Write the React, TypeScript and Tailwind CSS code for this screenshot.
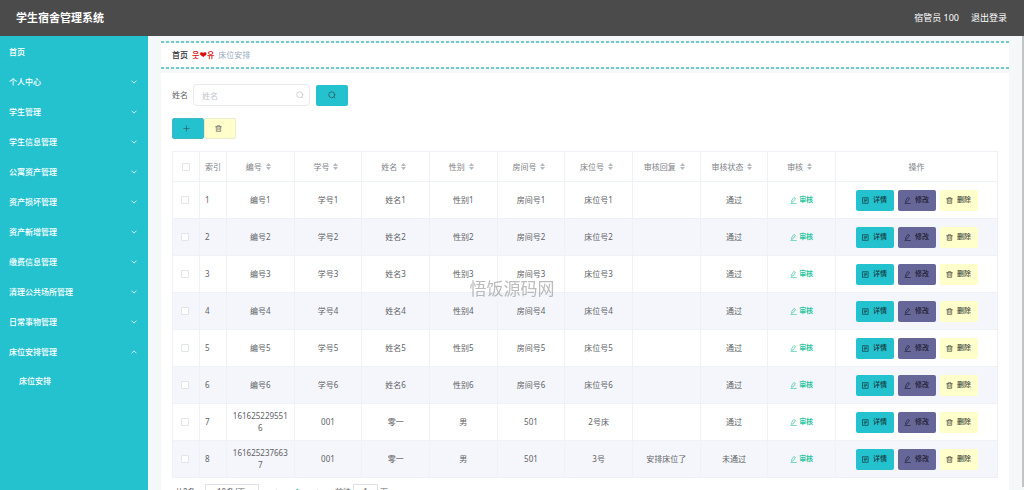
import type { ReactNode } from "react";

const MENU = [
  "个人中心",
  "学生管理",
  "学生信息管理",
  "公寓资产管理",
  "资产损坏管理",
  "资产新增管理",
  "缴费信息管理",
  "清理公共场所管理",
  "日常事物管理",
];

const COLUMNS = ["编号", "学号", "姓名", "性别", "房间号", "床位号", "审核回复", "审核状态", "审核"];

type Row = {
  code: string;
  student: string;
  name: string;
  gender: string;
  room: string;
  bed: string;
  reply: string;
  status: string;
};

const ROWS: Row[] = [
  ...[1, 2, 3, 4, 5, 6].map((n) => ({
    code: `编号${n}`,
    student: `学号${n}`,
    name: `姓名${n}`,
    gender: `性别${n}`,
    room: `房间号${n}`,
    bed: `床位号${n}`,
    reply: "",
    status: "通过",
  })),
  { code: "1616252295516", student: "001", name: "零一", gender: "男", room: "501", bed: "2号床", reply: "", status: "通过" },
  { code: "1616252376637", student: "001", name: "零一", gender: "男", room: "501", bed: "3号", reply: "安排床位了", status: "未通过" },
];

function Icon({ children, className = "size-[7px]" }: { children: ReactNode; className?: string }) {
  return (
    <svg
      viewBox="0 0 16 16"
      fill="none"
      stroke="currentColor"
      strokeWidth={1.5}
      strokeLinecap="round"
      strokeLinejoin="round"
      className={`shrink-0 ${className}`}
      aria-hidden
    >
      {children}
    </svg>
  );
}

function SearchIcon() {
  return (
    <Icon className="size-2">
      <circle cx="7.5" cy="7.5" r="6" />
      <path d="M12 12l2 2" />
    </Icon>
  );
}

function TrashIcon() {
  return (
    <Icon>
      <path d="M1.5 4h13M5 4V1.5h6V4M3 4v10.5h10V4M6.3 7v4.5M9.7 7v4.5" />
    </Icon>
  );
}

function EditIcon() {
  return (
    <Icon>
      <path d="M9.5 1.5l3 2-5.5 7.5-3.5 1.5.5-4zM2 15h12.5" />
    </Icon>
  );
}

function DetailIcon() {
  return (
    <Icon>
      <path d="M2 1.5h12v13H2zM5 5h6M5 8h6M5 11h3.5" />
    </Icon>
  );
}

function Chevron({ up = false }: { up?: boolean }) {
  return (
    <Icon className="size-[6px]">
      <path d={up ? "M2 11l6-6 6 6" : "M2 5l6 6 6-6"} strokeWidth={2} />
    </Icon>
  );
}

function SortCaret() {
  return (
    <svg viewBox="0 0 5 7" className="ml-1 mr-1 h-[7px] w-[5px] fill-[#b4b8bf]" aria-hidden>
      <path d="M2.5 0L5 3H0zM2.5 7L0 4h5z" />
    </svg>
  );
}

function Checkbox({ label }: { label: string }) {
  return (
    <input
      type="checkbox"
      aria-label={label}
      className="block size-2 appearance-none rounded-[1px] border border-[#e2e5ea] bg-white"
    />
  );
}

function Sidebar() {
  return (
    <nav className="w-[148px] shrink-0 bg-[#24c2cf] text-[8px] font-medium text-white">
      <a href="#home" className="flex h-[31px] items-center pl-[9px]">
        首页
      </a>
      {MENU.map((label) => (
        <button key={label} type="button" className="flex h-[30px] w-full items-center justify-between pl-[9px] pr-[11px]">
          {label}
          <Chevron />
        </button>
      ))}
      <button type="button" className="flex h-[30px] w-full items-center justify-between pl-[9px] pr-[11px]">
        床位安排管理
        <Chevron up />
      </button>
      <a href="#beds" className="flex h-[27px] items-center pl-[19px]">
        床位安排
      </a>
    </nav>
  );
}

function Dashes() {
  return <div className="h-[2px] bg-[repeating-linear-gradient(90deg,#79c7c7_0_3px,#e3f5f5_3px_5px)]" />;
}

function Breadcrumb() {
  return (
    <div className="bg-white">
      <Dashes />
      <div className="flex h-6 items-center px-[11px] text-[8px]">
        <a href="#home" className="font-medium text-[#303133]">
          首页
        </a>
        <span className="mx-1 flex items-center font-['Noto_Sans_CJK_KR',sans-serif] font-medium text-[#d80b0b]">
          웃<span className="font-['DejaVu_Sans',sans-serif] text-[9px] font-bold leading-[12px]">❤</span>유
        </span>
        <span className="text-[#97a8be]">床位安排</span>
      </div>
      <Dashes />
    </div>
  );
}

function Toolbar() {
  return (
    <>
      <form className="flex items-center" onSubmit={(e) => e.preventDefault()}>
        <label htmlFor="name" className="mr-[5px] text-[8px] text-[#606266]">
          姓名
        </label>
        <div className="relative mr-[6px]">
          <input
            id="name"
            placeholder="姓名"
            className="block h-[22px] w-[117px] rounded-sm border border-[#e8eaef] bg-white pl-2 text-[8px] placeholder:text-[#c0c4cc]"
          />
          <span className="absolute right-[6px] top-[7px] text-[#c0c4cc]">
            <SearchIcon />
          </span>
        </div>
        <button
          type="submit"
          aria-label="查询"
          className="grid h-[21px] w-8 place-items-center rounded-xs bg-[#24c2cf] text-[#33555c]"
        >
          <SearchIcon />
        </button>
      </form>
      <div className="mt-3 flex">
        <button
          type="button"
          aria-label="新增"
          className="flex h-[21px] w-8 items-center rounded-xs border border-[#40b8c4] bg-[#24c2cf] pl-[10px] text-[#33555c]"
        >
          <Icon>
            <path d="M8 2v12M2 8h12" />
          </Icon>
        </button>
        <button
          type="button"
          aria-label="删除"
          className="flex h-[21px] w-8 items-center rounded-xs border border-[#ebebcf] bg-[#ffffcc] pl-[10px] text-[#606266]"
        >
          <TrashIcon />
        </button>
      </div>
    </>
  );
}

const CELL = "border border-[#eef1f6] px-[4px]";
const ACTION = "flex h-[21px] w-[38px] items-center justify-center gap-1 rounded-xs text-[7px] font-medium";

function BedTable() {
  return (
    <table className="mt-3 w-full table-fixed border-collapse text-center text-[8px] leading-[12px] text-[#606266]">
      <colgroup>
        <col className="w-[27px]" />
        <col className="w-[27px]" />
        {COLUMNS.map((c) => (
          <col key={c} />
        ))}
        <col className="w-[162px]" />
      </colgroup>
      <thead>
        <tr className="h-[30px] text-[#7d8086]">
          <th className={`${CELL} pl-[9px]`}>
            <Checkbox label="全选" />
          </th>
          <th className={`${CELL} pl-[5px] text-left font-normal`}>索引</th>
          {COLUMNS.map((c) => (
            <th key={c} className={`${CELL} font-normal`}>
              <span className="flex items-center justify-center">
                {c}
                <SortCaret />
              </span>
            </th>
          ))}
          <th className={`${CELL} font-normal`}>操作</th>
        </tr>
      </thead>
      <tbody>
        {ROWS.map((row, i) => (
          <tr key={row.code} className="h-[37px] even:bg-[#f5f6fb]">
            <td className={`${CELL} pl-[8px]`}>
              <Checkbox label={`选择 ${i + 1}`} />
            </td>
            <td className={`${CELL} pl-[5px] text-left`}>{i + 1}</td>
            <td className={`${CELL} break-all`}>{row.code}</td>
            <td className={CELL}>{row.student}</td>
            <td className={CELL}>{row.name}</td>
            <td className={CELL}>{row.gender}</td>
            <td className={CELL}>{row.room}</td>
            <td className={CELL}>{row.bed}</td>
            <td className={CELL}>{row.reply}</td>
            <td className={CELL}>{row.status}</td>
            <td className={CELL}>
              <button type="button" className="mx-auto flex items-center gap-[2px] text-[7px] font-bold text-[#2cc5a0]">
                <EditIcon />
                审核
              </button>
            </td>
            <td className={CELL}>
              <div className="flex justify-center gap-1">
                <button type="button" className={`${ACTION} bg-[#24c2cf] text-[#16383c]`}>
                  <DetailIcon />
                  详情
                </button>
                <button type="button" className={`${ACTION} bg-[#666699] text-[#1d1d30]`}>
                  <EditIcon />
                  修改
                </button>
                <button type="button" className={`${ACTION} bg-[#ffffcc] text-[#42423a]`}>
                  <TrashIcon />
                  删除
                </button>
              </div>
            </td>
          </tr>
        ))}
      </tbody>
    </table>
  );
}

function Pagination() {
  return (
    <div className="mt-[6px] flex h-[15px] items-center px-[3px] text-[8px] leading-[12px] text-[#606266]">
      <span className="w-[30px]">共8条</span>
      <select
        aria-label="每页条数"
        className="h-[15px] w-[54px] appearance-none rounded-[1px] border border-[#dcdfe6] bg-white pl-[11px]"
      >
        <option>10条/页</option>
      </select>
      <div className="mx-[13px] flex w-[50px] items-center justify-between">
        <button type="button" aria-label="上一页" className="text-[#909399]">
          <Icon className="size-[6px]">
            <path d="M11 2L5 8l6 6" />
          </Icon>
        </button>
        <button type="button" className="font-bold text-[#2cc5a0]">
          1
        </button>
        <button type="button" aria-label="下一页" className="text-[#909399]">
          <Icon className="size-[6px]">
            <path d="M5 2l6 6-6 6" />
          </Icon>
        </button>
      </div>
      <label htmlFor="page">前往</label>
      <input
        id="page"
        defaultValue="1"
        className="mx-[2px] h-[15px] w-[25px] rounded-[1px] border border-[#dcdfe6] bg-white text-center"
      />
      <span>页</span>
    </div>
  );
}

export default function App() {
  return (
    <div className="flex h-screen flex-col overflow-hidden bg-[#f5f8f9] font-['Noto_Sans','Noto_Sans_CJK_SC',sans-serif]">
      <header className="flex h-9 shrink-0 items-center justify-between bg-[#4b4b4b] pl-4 pr-[17px] text-white">
        <h1 className="text-[11px] font-bold">学生宿舍管理系统</h1>
        <div className="flex items-center gap-3 text-[9px]">
          <span>宿管员 100</span>
          <button type="button">退出登录</button>
        </div>
      </header>
      <div className="flex min-h-0 flex-1">
        <Sidebar />
        <main className="flex min-w-0 flex-1 flex-col overflow-hidden px-[13px] pt-[5px]">
          <Breadcrumb />
          <section className="mt-1 flex-1 bg-white px-[11px] pt-[11px]">
            <Toolbar />
            <BedTable />
            <Pagination />
          </section>
        </main>
        {/* scroll track */}
        <div className="mb-[3px] w-[2px] shrink-0 bg-[#c1c3c4]" />
      </div>
      <div className="pointer-events-none fixed inset-x-0 top-[278px] text-center font-['Liberation_Serif','Noto_Sans_CJK_SC',serif] text-[17px] leading-6 text-[#909090]/60">
        悟饭源码网
      </div>
    </div>
  );
}
